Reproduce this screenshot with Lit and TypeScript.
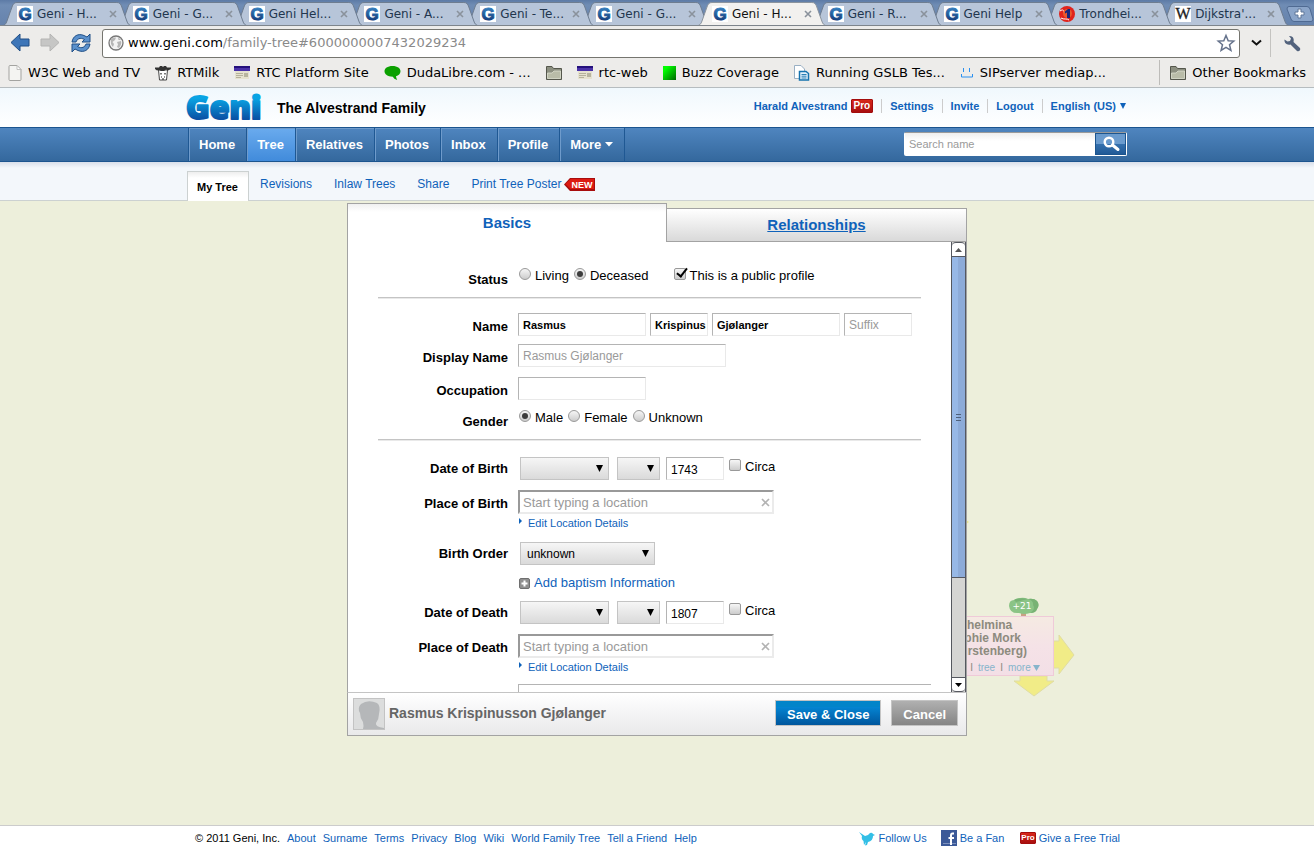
import { LitElement, html, css, nothing, TemplateResult } from "lit";
import { customElement, property } from "lit/decorators.js";
import { classMap } from "lit/directives/class-map.js";
import { styleMap } from "lit/directives/style-map.js";

const reset = css`
  *, *::before, *::after { box-sizing: border-box; }
  button, input, select { font: inherit; color: inherit; margin: 0; border-radius: 0; }
  button { background: none; border: 0; padding: 0; cursor: pointer; }
  a { text-decoration: none; color: #0f62ba; }
  svg { display: block; flex: none; overflow: visible; }
  input::placeholder { color: #9a9a9a; opacity: 1; }
`;

/* ---------- browser chrome ---------- */

const geniFavicon = html`<svg width="16" height="16" viewBox="0 0 16 16">
  <defs><linearGradient id="gf" x1="0" y1="0" x2="0" y2="1"><stop offset="0" stop-color="#3d8ccb"></stop><stop offset="1" stop-color="#0b2c6b"></stop></linearGradient></defs>
  <rect width="16" height="16" fill="#fff"></rect>
  <text x="8" y="14" text-anchor="middle" font-family="Liberation Sans, sans-serif" font-weight="700" font-size="17" fill="url(#gf)" stroke="url(#gf)" stroke-width="1">G</text>
</svg>`;

const redFavicon = html`<svg width="16" height="16" viewBox="0 0 16 16">
  <circle cx="8" cy="8" r="8" fill="#e0231c"></circle>
  <path d="M1 5 C4 3 5 4 5 7 M2 12 C5 14 8 12 10 14" stroke="#fff" stroke-width="1" fill="none"></path>
  <circle cx="8.500" cy="7.500" r="4.500" fill="#e9572c"></circle>
  <path d="M6 5.500 L9 3 H11 V12 H8 V6.500 L6 7.500 Z" fill="#14267c"></path>
</svg>`;

const wikiFavicon = html`<svg width="16" height="16" viewBox="0 0 16 16">
  <rect width="16" height="16" fill="#fff"></rect>
  <text x="8" y="13" text-anchor="middle" font-family="Liberation Serif, serif" font-size="16" fill="#222" stroke="#222" stroke-width="0.300">W</text>
</svg>`;

const folderIcon = html`<svg width="16" height="16" viewBox="0 0 16 16">
  <path d="M.5 14.500 V1.500 H6 L7.500 3.500 H15.500 V14.500 Z" fill="#8c8f80" stroke="#55574c"></path>
  <path d="M1.500 13.500 V8 H6 L8 6 H14.500 V13.500 Z" fill="#b9bca8" stroke="#dcdecf" stroke-width="0.800"></path>
</svg>`;

const pageIcon = html`<svg width="14" height="16" viewBox="0 0 14 16">
  <path d="M1 1.500 Q1 .5 2 .5 H9 L13 4.500 V14.500 Q13 15.500 12 15.500 H2 Q1 15.500 1 14.500 Z" fill="#f4f4f2" stroke="#a3a3a0"></path>
  <path d="M9 .5 V4.500 H13 Z" fill="#fff" stroke="#b5b5b2" stroke-width="0.800"></path>
</svg>`;

const cowIcon = html`<svg width="16" height="16" viewBox="0 0 16 16">
  <path d="M3.500 5 H12.500 L11.500 15 H4.500 Z" fill="#fff" stroke="#333" stroke-width="0.900"></path>
  <path d="M0 2.500 H4 L5 1 H7 L8 2 L9 1 H11 L12 2.500 H16 V4 L13 5.500 L11 4.500 L9 6 H6 L4 5 L2 5.500 L0 4 Z" fill="#333"></path>
  <path d="M6 8 V9.500 M10 8 V9.500 M6 12 H7 M9 12 H10 M7 14 H9" stroke="#222" stroke-width="1.200"></path>
</svg>`;

const newsIcon = html`<svg width="16" height="14" viewBox="0 0 16 14">
  <rect width="16" height="5" fill="#4a32a8"></rect><rect width="16" height="2" fill="#24107c"></rect>
  <rect x="1" y="5" width="14" height="8" fill="#e6e2cf"></rect>
  <path d="M2 7.500 H9 M2 9.500 H9 M2 11.500 H7" stroke="#b5b19c"></path>
  <rect x="10" y="7" width="4" height="4" fill="#b8b49f"></rect>
</svg>`;

const bubbleIcon = html`<svg width="17" height="14" viewBox="0 0 17 14">
  <path d="M8.500 0 C13.500 0 16.500 2.300 16.500 5.300 C16.500 7.800 14.500 9.600 12 10.300 Q12.200 12.500 13.200 14 Q9.800 13 8.800 10.700 C3.500 10.700 .5 8.300 .5 5.300 C.5 2.300 3.500 0 8.500 0 Z" fill="#0ba000"></path>
</svg>`;

const greenIcon = html`<svg width="13" height="14" viewBox="0 0 13 14">
  <defs><linearGradient id="gr" x1="0" y1="0" x2="1" y2="1"><stop offset="0.200" stop-color="#0f0"></stop><stop offset="1" stop-color="#060"></stop></linearGradient></defs>
  <rect width="13" height="14" fill="url(#gr)"></rect>
</svg>`;

const docsIcon = html`<svg width="16" height="16" viewBox="0 0 16 16">
  <path d="M.5 .5 H7 L10.500 4 V13.500 H.5 Z" fill="#fff" stroke="#9ab0c4"></path>
  <path d="M5.500 6.500 H12 L14.500 8.500 V15 H5.500 Z" fill="#e4f2fb" stroke="#1573ae" stroke-width="1.500"></path>
  <path d="M7.500 9.500 H12.500 M7.500 11.200 H12.500 M7.500 13 H12.500" stroke="#1573ae" stroke-width="0.900"></path>
</svg>`;

const smileIcon = html`<svg width="14" height="14" viewBox="0 0 14 14">
  <path d="M3.500 2 V6 M9.500 2 V6 M1.500 8 V11 H12.500 V8" stroke="#2a90f0" fill="none"></path>
</svg>`;

const tabs = [
  ["Geni - H...", geniFavicon], ["Geni - G...", geniFavicon], ["Geni Hel...", geniFavicon],
  ["Geni - A...", geniFavicon], ["Geni - Te...", geniFavicon], ["Geni - G...", geniFavicon],
  ["Geni - H...", geniFavicon], ["Geni - R...", geniFavicon], ["Geni Help", geniFavicon],
  ["Trondhei...", redFavicon], ["Dijkstra'...", wikiFavicon],
] as [string, TemplateResult][];
const activeTab = 6;

const bookmarks = [
  ["W3C Web and TV", pageIcon], ["RTMilk", cowIcon], ["RTC Platform Site", newsIcon],
  ["DudaLibre.com - ...", bubbleIcon], ["", folderIcon], ["rtc-web", newsIcon],
  ["Buzz Coverage", greenIcon], ["Running GSLB Tes...", docsIcon], ["SIPserver mediap...", smileIcon],
] as [string, TemplateResult][];

@customElement("browser-chrome")
class BrowserChrome extends LitElement {
  static styles = [reset, css`
    :host { display: block; font: 13px/18px "DejaVu Sans", sans-serif; color: #000; background: #edecea; border-bottom: 1px solid #b6bcbf; }
    .strip { display: flex; height: 26px; padding-left: 5px; background: linear-gradient(#5d7ba6, #6f8cb4 5px, #6683ad); border-bottom: 1px solid #7e858c; overflow: hidden; }
    .tabs { flex: 1; min-width: 0; display: flex; }
    .tab { flex: 1 1 0; min-width: 0; position: relative; display: flex; align-items: center; padding: 3px 2px 0 12px; }
    .shape { position: absolute; left: -3px; top: 2px; width: calc(100% + 14px); height: 24px; }
    .pick { position: relative; flex: 1; min-width: 0; display: flex; align-items: center; gap: 4px; font-size: 12px; color: #22364e; text-align: left; white-space: nowrap; }
    .on .pick { color: #111; }
    .close { position: relative; width: 10px; height: 10px; margin-right: 1px; }
    .new { width: 29px; height: 16px; margin: 6px 0 0 6px; }
    .bar { display: flex; align-items: center; height: 33px; padding: 1px 13px 0 10px; }
    .nav { display: flex; align-items: center; gap: 10px; margin-right: 10px; }
    .address { flex: 1; min-width: 0; display: flex; align-items: center; height: 29px; border: 1px solid #75756f; border-radius: 3px; background: #fff; padding: 0 4px 0 5px; }
    .globe { margin-right: 4px; }
    .address input { flex: 1; min-width: 0; border: 0; outline: 0; padding: 0; background: none; color: #8a8a8a; }
    .drop { margin: 0 8px 0 11px; }
    .wrench { padding-left: 13px; border-left: 1px solid #c4c3c0; height: 28px; display: flex; align-items: center; }
    .marks { display: flex; align-items: center; height: 28px; padding: 0 8px 1px; gap: 15px; }
    .mark { display: flex; align-items: center; gap: 6px; color: #000; white-space: nowrap; height: 25px; }
    .other { margin-left: auto; padding-left: 10px; border-left: 1px solid #bdbcb9; }
  `];

  render() {
    return html`
      <div class="strip">
        <div class="tabs">
          ${tabs.map(([title, icon], i) => {
            const on = i === activeTab;
            return html`<div class=${classMap({ tab: true, on })} style=${styleMap({ zIndex: String(on ? 20 : tabs.length - i) })}>
              <svg class="shape" viewBox="0 0 130 24" preserveAspectRatio="none">
                <path d="M0 24 C3 23 4 22 5 19 L10 5 C11 2 12 .5 15 .5 H115 C118 .5 119 2 120 5 L125 19 C126 22 127 23 130 24"
                  fill=${on ? "#f2f1ef" : "#b7c5d9"} stroke=${on ? "#8b949e" : "#6d7c90"}></path>
              </svg>
              <button class="pick">${icon}<span>${title}</span></button>
              <button class="close" aria-label="Close tab"><svg width="10" height="10" viewBox="0 0 10 10"><path d="M2 2 L8 8 M8 2 L2 8" stroke="#8a929c" stroke-width="1.600"></path></svg></button>
            </div>`;
          })}
        </div>
        <button class="new" aria-label="New tab"><svg width="29" height="16" viewBox="0 0 29 16">
          <path d="M4 .5 H22 Q24 .5 25 3 L28 13 Q28 15.500 26 15.500 H9 Q7 15.500 6 13 L2 3 Q2 .5 4 .5 Z" fill="#8ba5c9" stroke="#4f6a92"></path>
          <path d="M13 3 H16 V6 H19 V9 H16 V12 H13 V9 H10 V6 H13 Z" fill="#fff" stroke="#5f7799"></path>
        </svg></button>
      </div>
      <div class="bar">
        <div class="nav">
          <button aria-label="Back"><svg width="20" height="20" viewBox="0 0 20 20"><path d="M1 9.500 L10 1 V6 H19 V13 H10 V18 Z" fill="#3e76b8" stroke="#204f86"></path></svg></button>
          <button aria-label="Forward"><svg width="20" height="20" viewBox="0 0 20 20"><path d="M19 9.500 L10 1 V6 H1 V13 H10 V18 Z" fill="#c6c6c5" stroke="#b4b4b3"></path></svg></button>
          <button aria-label="Reload"><svg width="22" height="20" viewBox="0 0 22 20">
            <path d="M2 9 C3 3 8 0 14 2.500 L17 4 L20 1 V9 H12 L14.500 6.500 C10 4 7 6 6 9 Z" fill="#5a90cc" stroke="#204f86"></path>
            <path d="M20 11 C19 17 14 20 8 17.500 L5 16 L2 19 V11 H10 L7.500 13.500 C12 16 15 14 16 11 Z" fill="#5a90cc" stroke="#204f86"></path></svg></button>
        </div>
        <div class="address">
          <svg class="globe" width="16" height="16" viewBox="0 0 16 16"><circle cx="8" cy="8" r="7" fill="#f2f2f2" stroke="#777" stroke-width="1.300"></circle>
            <path d="M3 4 Q5 2 8 2.500 L7 5 L4.500 7 L6 9 L5 12 Q2 9 3 4 Z M9 7 L13 6 Q14 9 11 13 L9 12 L10 9.500 Z M10 2 L13 5 L10.500 5 Z" fill="#b5b5b5"></path></svg>
          <label for="url">www.geni.com</label><input id="url" .value=${"/family-tree#6000000007432029234"}>
          <button aria-label="Bookmark this page"><svg width="18" height="18" viewBox="0 0 18 18"><path d="M9 1.500 L11.200 6.700 L16.800 7.100 L12.500 10.800 L13.900 16.300 L9 13.300 L4.100 16.300 L5.500 10.800 L1.200 7.100 L6.800 6.700 Z" fill="#fff" stroke="#66738c" stroke-width="1.500"></path></svg></button>
        </div>
        <button class="drop" aria-label="More"><svg width="11" height="8" viewBox="0 0 11 8"><path d="M1 1.500 L5.500 5.500 L10 1.500" fill="none" stroke="#111" stroke-width="2"></path></svg></button>
        <button class="wrench" aria-label="Tools"><svg width="17" height="17" viewBox="0 0 17 17"><path d="M5 1 L7 3.500 L6 6 L3.500 6.500 L.5 4.500 C0 8 3 10.500 6.500 9.500 L13 16 C15 17 17 15 16 13 L9.500 7 C10.500 3.500 8.500 .5 5 1 Z" fill="#52627c"></path></svg></button>
      </div>
      <nav class="marks">
        ${bookmarks.map(([title, icon]) => html`<a class="mark" href="#" aria-label=${title || "Folder"}>${icon}${title ? html`<span>${title}</span>` : nothing}</a>`)}
        <a class="mark other" href="#">${folderIcon}<span>Other Bookmarks</span></a>
      </nav>`;
  }
}

/* ---------- site header ---------- */

@customElement("site-header")
class SiteHeader extends LitElement {
  static styles = [reset, css`
    :host { display: block; font: bold 11px/14px "Liberation Sans", Arial, sans-serif; }
    .wrap { width: 100%; max-width: 940px; margin: 0 auto; display: flex; }
    .top { background: linear-gradient(#f0f8fd, #fff); }
    .top .wrap { height: 39px; align-items: center; }
    .title { margin: 0 auto 0 14px; font-size: 14px; line-height: 18px; color: #000; }
    .account { display: flex; align-items: center; margin: 0 0 4px; padding: 0; list-style: none; }
    .account li { padding: 0 8px; border-left: 1px solid #ccc; }
    .account li:first-child { border: 0; }
    .account li:last-child { padding-right: 0; }
    .user { display: flex; align-items: center; gap: 3px; }
    .main { background: linear-gradient(#4f85bf, #34689d); border-top: 1px solid #1c558f; border-bottom: 1px solid #1c558f; }
    .main .wrap { height: 33px; align-items: stretch; font-size: 13px; }
    .menu { display: flex; border-left: 1px solid #1f5893; margin-left: 1px; }
    .item { display: flex; align-items: center; gap: 4px; padding: 0 11px 0 10px; color: #fff; border-right: 1px solid #1f5893; box-shadow: inset 1px 1px 0 #6f9bcb; }
    .item.on { background: linear-gradient(#6aabee, #418bdb); }
    .search { display: flex; align-items: stretch; margin: 4px 0 5px auto; width: 223px; border: 1px solid #fff; border-top-color: #9a9a9a; border-radius: 2px; font-weight: 400; }
    .search input { flex: 1; min-width: 0; border: 0; padding: 0 4px; font-size: 11px; background: linear-gradient(#eee, #fff 8px); outline: 0; }
    .go { width: 31px; display: flex; align-items: center; justify-content: center; background: linear-gradient(#6a9bce 50%, #3470ae 50%, #215a97); border: 1px solid #1c558f; }
    .sub { background: linear-gradient(#d8dfea, #f3f7fb 6px); border-bottom: 1px solid #ccd1d1; padding-top: 9px; font-weight: 400; }
    .sub .wrap { align-items: stretch; height: 29px; gap: 22px; }
    .mine { display: flex; align-items: center; padding: 0 10px 0 9px; margin-right: -11px; margin-bottom: -1px; font-weight: 700; color: #000; background: linear-gradient(#eee, #fff 6px); border: 1px solid #ccd1d1; border-bottom: 0; }
    .link { display: flex; align-items: center; gap: 3px; padding-bottom: 3px; font-size: 12px; }
  `];

  render() {
    return html`
      <header class="top"><div class="wrap">
        <svg width="76" height="38" viewBox="0 0 76 38" role="img" aria-label="Geni">
          <defs><linearGradient id="lg" gradientUnits="userSpaceOnUse" x1="0" y1="7" x2="0" y2="31"><stop offset="0.100" stop-color="#09a4e4"></stop><stop offset="0.950" stop-color="#0a52a5"></stop></linearGradient></defs>
          <text x="-1" y="30" font-family="Open Sans, Lato, sans-serif" font-weight="800" font-size="32" fill="url(#lg)" stroke="url(#lg)" stroke-width="2" stroke-linejoin="round">Geni</text>
        </svg>
        <h1 class="title">The Alvestrand Family</h1>
        <ul class="account">
          <li class="user"><a href="#">Harald Alvestrand</a><pro-badge></pro-badge></li>
          <li><a href="#">Settings</a></li><li><a href="#">Invite</a></li><li><a href="#">Logout</a></li>
          <li class="user"><a href="#">English (US)</a><svg width="8" height="7" viewBox="0 0 8 7"><path d="M1 1 H7 L4 7 Z" fill="#0f62ba"></path></svg></li>
        </ul>
      </div></header>
      <div class="main"><div class="wrap">
        <nav class="menu">
          ${["Home", "Tree", "Relatives", "Photos", "Inbox", "Profile"].map((t) => html`<a href="#" class=${classMap({ item: true, on: t === "Tree" })}>${t}</a>`)}
          <a href="#" class="item">More <svg width="8" height="5" viewBox="0 0 8 5"><path d="M0 0 H8 L4 4.500 Z" fill="#fff"></path></svg></a>
        </nav>
        <form class="search">
          <input type="text" placeholder="Search name" aria-label="Search name">
          <button class="go" type="button" aria-label="Search"><svg width="18" height="16" viewBox="0 0 18 16"><circle cx="7" cy="6" r="4.300" fill="none" stroke="#fff" stroke-width="2.400"></circle><path d="M10.500 9 L16 13.500" stroke="#fff" stroke-width="3" stroke-linecap="round"></path></svg></button>
        </form>
      </div></div>
      <div class="sub"><nav class="wrap">
        <a href="#" class="mine">My Tree</a>
        <a href="#" class="link">Revisions</a><a href="#" class="link">Inlaw Trees</a><a href="#" class="link">Share</a>
        <a href="#" class="link">Print Tree Poster
          <svg width="31" height="13" viewBox="0 0 31 13"><path d="M0 6.500 L6 0 H31 V13 H6 Z" fill="#a80d0d"></path><path d="M1.500 6 L6.500 1 H30 V11 H6.500 Z" fill="#dc1a12"></path><text x="18" y="9.500" text-anchor="middle" font-family="Liberation Sans, sans-serif" font-size="9" font-weight="700" fill="#fff">NEW</text></svg></a>
      </nav></div>`;
  }
}

@customElement("pro-badge")
class ProBadge extends LitElement {
  @property({ type: Boolean, reflect: true }) small = false;
  static styles = css`
    :host { display: inline-block; padding: 0 2px; background: linear-gradient(#d8261a, #a80f0f); border: 1px solid #a30d0d; border-radius: 1px; color: #fff; font: bold 10px/12px "Liberation Sans", sans-serif; }
    :host([small]) { font-size: 8px; line-height: 10px; padding: 0; }
  `;
  render() { return html`Pro`; }
}

/* ---------- tree behind the dialog ---------- */

@customElement("tree-node")
class TreeNode extends LitElement {
  static styles = [reset, css`
    :host { display: block; width: 135px; font: bold 12px/13px "Liberation Sans", Arial, sans-serif; }
    .badge { position: absolute; left: 68px; top: -19px; }
    .arrow { position: absolute; }
    .side { left: 113px; top: 18px; }
    .down { left: 73px; top: 60px; }
    .card { position: relative; width: 114px; padding: 2px 8px; border: 1px solid #efcad8; background: linear-gradient(#f5eae2, #f5e2e7 30px, #f3dfe6); color: #8d8b7e; }
    .name { margin: 0; font-size: inherit; }
    .acts { display: flex; align-items: center; gap: 5px; padding-top: 4px; margin: 0; font: 10px/11px "Liberation Sans", Arial, sans-serif; white-space: nowrap; }
    .acts a { color: #86b4cb; display: flex; align-items: center; gap: 2px; }
  `];
  render() {
    return html`
      <svg class="badge" width="32" height="20" viewBox="0 0 32 20"><rect x="13" y="15" width="5" height="5" fill="#c9a184"></rect>
        <path d="M1 9 Q1 3 6 3 Q8 1 12 1 Q16 0 20 2 Q26 1 29 4 Q32 8 29 12 Q28 16 22 16 Q16 18 11 16 Q2 17 1 9 Z" fill="#8bc486"></path>
        <path d="M20 2 Q26 1 29 4 Q32 8 29 12 Q28 16 22 16 Q28 12 25 8 Q26 4 20 2 Z M6 3 Q12 0 20 2 L8 5 Z" fill="#78b274"></path>
        <text x="14" y="12" text-anchor="middle" font-family="DejaVu Sans, sans-serif" font-size="9" font-weight="400" fill="#fff">+21</text></svg>
      <svg class="arrow side" width="22" height="42" viewBox="0 0 22 42"><path d="M0 7 H6 V1 L21 21 L6 40 V34 H0 Z" fill="#f1ec87" stroke="#dfdca5"></path></svg>
      <svg class="arrow down" width="42" height="21" viewBox="0 0 42 21"><path d="M7 0 V5 H1 L21 20 L41 5 H34 V0 Z" fill="#f1ec87" stroke="#dfdca5"></path></svg>
      <div class="card">
        <h3 class="name">Wilhelmina<br>Sophie Mork<br>(Fürstenberg)</h3>
        <p class="acts"><a href="#">edit</a>I<a href="#">tree</a>I<a href="#">more <svg width="7" height="6" viewBox="0 0 7 6"><path d="M0 0 H7 L3.500 6 Z" fill="#86b4cb"></path></svg></a></p>
      </div>`;
  }
}

/* ---------- profile dialog ---------- */

@customElement("profile-dialog")
class ProfileDialog extends LitElement {
  static styles = [reset, css`
    :host { display: block; width: 100%; max-width: 620px; font: 13px/16px "Liberation Sans", Arial, sans-serif; color: #000; }
    .tabs { display: grid; grid-template-columns: 320fr 300fr; align-items: end; }
    .tab { display: flex; align-items: center; justify-content: center; font-size: 15px; font-weight: 700; color: #0f62ba; }
    .first { height: 39px; background: linear-gradient(#f0f0f0, #fff 8px); border: 1px solid #a3a3a3; border-bottom: 0; }
    .second { height: 34px; background: linear-gradient(#fff, #d9d9d9); border: 1px solid #a3a3a3; border-left: 0; text-decoration: underline; }
    .body { display: flex; height: 450px; background: #fff; border: 1px solid #a3a3a3; border-width: 0 1px; overflow: hidden; }
    .form { flex: 1; min-width: 0; padding-top: 26px; overflow: hidden; }
    .row { display: grid; grid-template-columns: 160px 1fr; column-gap: 10px; align-items: start; margin-bottom: 10px; }
    .tight { margin-bottom: 8px; }
    .choice { margin-bottom: 9px; }
    .label { font-weight: 700; text-align: right; padding-top: 6px; }
    .choice .label { padding-top: 4px; }
    .fields { display: flex; gap: 4px; }
    .choices { display: flex; padding-left: 1px; gap: 5px; }
    .rule { height: 2px; border: 0; border-top: 1px solid #c4c4c4; border-bottom: 1px solid #e9e9e9; margin: 0 30px 14px 30px; }
    .opt { display: flex; align-items: center; gap: 4px; }
    .opt input { appearance: none; width: 12px; height: 12px; margin-bottom: 4px; border: 1px solid #999; background: linear-gradient(#f6f6f6, #ccc); display: grid; place-items: center; }
    .opt input[type="radio"] { border-radius: 50%; }
    .opt input[type="checkbox"] { border-radius: 2px; }
    .opt input[type="radio"]:checked::after { content: ""; width: 6px; height: 6px; border-radius: 50%; background: #3c3c3c; }
    .opt input[type="checkbox"]:checked::after { content: ""; width: 6px; height: 11px; margin: -5px 0 0 4px; border: solid #000; border-width: 0 2px 2px 0; transform: rotate(38deg); }
    .public { margin-left: 20px; }
    .text { height: 23px; border: 1px solid #b4b4b4; border-right-color: #e9e9e9; border-bottom-color: #e9e9e9; background: #fff; padding: 0 1px 0 4px; font-size: 12px; outline: 0; }
    .bold { font-weight: 700; font-size: 11px; }
    .w128 { width: 128px; } .w58 { width: 58px; } .w68 { width: 68px; } .w208 { width: 208px; }
    .date { display: flex; padding: 2px 0 0 2px; gap: 8px; }
    .pick { display: grid; }
    .pick select, .pick svg { grid-area: 1 / 1; }
    .pick svg { justify-self: end; align-self: center; margin: 0 6px 0 0; pointer-events: none; }
    .pick select { appearance: none; width: 100%; height: 23px; padding: 0 6px; font-size: 12px; background: linear-gradient(#f6f6f6, #dadada); border: 1px solid #c4c4c4; outline: 0; }
    .month { width: 89px; } .day { width: 43px; } .order { width: 135px; }
    .year { width: 58px; margin-left: -2px; padding-top: 2px; }
    .date .opt { margin-left: -3px; height: 19px; }
    .place { display: flex; align-items: center; width: 256px; height: 24px; border: 2px solid #999; border-right-color: #ebebeb; border-bottom-color: #ebebeb; padding: 0 2px 0 3px; }
    .place input { flex: 1; min-width: 0; border: 0; padding: 2px 0 0; outline: 0; background: none; }
    .edit { display: flex; align-items: flex-start; gap: 6px; font-size: 11px; line-height: 14px; margin-top: 2px; width: max-content; }
    .edit svg { margin-top: 2px; }
    .add { grid-column: 2; display: flex; align-items: center; gap: 4px; padding-left: 1px; color: #0f62ba; width: max-content; }
    .more { height: 40px; margin: 0 20px 0 170px; border: 1px solid #b4b4b4; border-right: 0; }
    .scroll { width: 15px; display: flex; flex-direction: column; border: 1px solid #55585f; border-width: 0 1px; background: #d5d5d3; }
    .end { height: 15px; flex: none; display: grid; place-items: center; background: #fff; border: 1px solid #55585f; border-width: 1px 0; }
    .scroll .end:first-child { border-radius: 4px 4px 0 0; } .scroll .end:last-child { border-radius: 0 0 4px 4px; }
    .thumb { flex: 320 1 0; display: grid; place-items: center; background: linear-gradient(90deg, #97b8e6 50%, #8dabd8 50%); border-bottom: 1px solid #55585f; }
    .track { flex: 99 1 0; }
    .foot { display: flex; align-items: center; height: 44px; padding: 0 8px 0 5px; background: linear-gradient(#fff, #e9e9ea); border: 1px solid #a3a3a3; border-top-color: #c4c4c4; }
    .who { margin: 0 auto 2px 4px; font-size: 14px; line-height: 18px; color: #666; }
    .btn { height: 26px; margin-bottom: 2px; padding: 3px 11px 0; border: 1px solid #c4c4c4; color: #fff; font-weight: 700; }
    .save { margin-right: 10px; background: linear-gradient(#0284c9 25%, #0484d2 25%, #00569d); }
    .cancel { background: linear-gradient(#b0b0b0, #858585); }
  `];

  private opt(type: string, name: string, text: string, checked = false, cls = "") {
    return html`<label class="opt ${cls}"><input type=${type} name=${name} ?checked=${checked}>${text}</label>`;
  }
  private pick(cls: string, label: string, id = "", text = "") {
    return html`<span class="pick ${cls}"><select id=${id || nothing} aria-label=${label}><option>${text}</option></select>
      <svg width="7" height="7" viewBox="0 0 7 7"><path d="M0 0 H7 L3.500 7 Z" fill="#000"></path></svg></span>`;
  }
  private date(id: string, label: string, year: string) {
    return html`<div class="row">
      <label class="label" for=${id}>${label}</label>
      <div class="date">${this.pick("month", "Month")}${this.pick("day", "Day")}
        <input class="text year" id=${id} .value=${year}>${this.opt("checkbox", id + "c", "Circa")}</div>
    </div>`;
  }
  private place(id: string, label: string) {
    return html`<div class="row">
      <label class="label" for=${id}>${label}</label>
      <div>
        <div class="place"><input id=${id} placeholder="Start typing a location"><button type="button" aria-label="Clear"><svg width="9" height="9" viewBox="0 0 9 9"><path d="M1 1 L8 8 M8 1 L1 8" stroke="#b3b3b3" stroke-width="1.700"></path></svg></button></div>
        <a href="#" class="edit"><svg width="4" height="6" viewBox="0 0 4 6"><path d="M1 0 L4 3 L1 6 Z" fill="#0f62ba"></path></svg>Edit Location Details</a>
      </div>
    </div>`;
  }

  render() {
    return html`
      <div class="tabs"><a href="#" class="tab first">Basics</a><a href="#" class="tab second">Relationships</a></div>
      <div class="body">
        <form class="form">
          <div class="row choice"><span class="label">Status</span><div class="choices">
            ${this.opt("radio", "status", "Living")}${this.opt("radio", "status", "Deceased", true)}${this.opt("checkbox", "public", "This is a public profile", true, "public")}</div></div>
          <hr class="rule">
          <div class="row tight"><label class="label" for="first">Name</label><div class="fields">
            <input class="text bold w128" id="first" .value=${"Rasmus"}><input class="text bold w58" aria-label="Middle name" .value=${"Krispinusson"}>
            <input class="text bold w128" aria-label="Last name" .value=${"Gjølanger"}><input class="text w68" aria-label="Suffix" placeholder="Suffix"></div></div>
          <div class="row"><label class="label" for="display">Display Name</label><div class="fields"><input class="text w208" id="display" placeholder="Rasmus Gjølanger"></div></div>
          <div class="row"><label class="label" for="job">Occupation</label><div class="fields"><input class="text w128" id="job"></div></div>
          <div class="row choice"><span class="label">Gender</span><div class="choices">
            ${this.opt("radio", "gender", "Male", true)}${this.opt("radio", "gender", "Female")}${this.opt("radio", "gender", "Unknown")}</div></div>
          <hr class="rule">
          ${this.date("birth", "Date of Birth", "1743")}
          ${this.place("bplace", "Place of Birth")}
          <div class="row"><label class="label" for="order">Birth Order</label><div class="date">${this.pick("order", "Birth Order", "order", "unknown")}</div></div>
          <div class="row tight"><button type="button" class="add"><svg width="11" height="11" viewBox="0 0 11 11"><rect x=".5" y=".5" width="10" height="10" rx="1.500" fill="#909090" stroke="#6f6f6f"></rect><path d="M5.500 2.500 V8.500 M2.500 5.500 H8.500" stroke="#fff" stroke-width="2"></path></svg>Add baptism Information</button></div>
          ${this.date("death", "Date of Death", "1807")}
          ${this.place("dplace", "Place of Death")}
          <div class="more"></div>
        </form>
        <div class="scroll">
          <button class="end" aria-label="Scroll up"><svg width="7" height="4" viewBox="0 0 7 4"><path d="M0 4 L3.500 0 L7 4 Z" fill="#555"></path></svg></button>
          <div class="thumb"><svg width="5" height="7" viewBox="0 0 5 7"><path d="M0 .5 H5 M0 3.500 H5 M0 6.500 H5" stroke="#4f617c"></path></svg></div>
          <div class="track"></div>
          <button class="end" aria-label="Scroll down"><svg width="7" height="4" viewBox="0 0 7 4"><path d="M0 0 L3.500 4 L7 0 Z" fill="#000"></path></svg></button>
        </div>
      </div>
      <div class="foot">
        <svg width="32" height="32" viewBox="0 0 32 32"><rect x=".5" y=".5" width="31" height="31" fill="#dcdddd" stroke="#c3c3c3"></rect>
          <path d="M10 31 Q11 28 10 24 Q7 20 7 15 Q4 10 8 6 Q15 1 24 5 Q28 8 26 16 Q26 21 23 25 Q22 29 31 30 V31 Z" fill="#b5b7b9"></path></svg>
        <h2 class="who">Rasmus Krispinusson Gjølanger</h2>
        <button class="btn save">Save &amp; Close</button><button class="btn cancel">Cancel</button>
      </div>`;
  }
}

/* ---------- footer ---------- */

@customElement("site-footer")
class SiteFooter extends LitElement {
  static styles = [reset, css`
    :host { display: block; background: #fff; border-top: 1px solid #ccc; font: 11px/14px "Liberation Sans", Arial, sans-serif; }
    .wrap { width: 100%; max-width: 940px; height: 24px; margin: 0 auto; padding: 0 7px 0 8px; display: flex; align-items: center; gap: 7px; white-space: nowrap; }
    .social { display: flex; align-items: center; gap: 3px; }
    .first { margin-left: auto; }
    .gap { margin-left: 7px; }
    .wide { margin-left: 9px; }
  `];
  render() {
    return html`<footer class="wrap"><span>© 2011 Geni, Inc.</span>
      ${["About", "Surname", "Terms", "Privacy", "Blog", "Wiki", "World Family Tree", "Tell a Friend", "Help"].map((t) => html`<a href="#">${t}</a>`)}
      <a href="#" class="social first"><svg width="16" height="15" viewBox="0 0 16 15"><path d="M0 1 L6 5 Q9 5 11 2 Q13 1 14 3 L16 4 L14 5 Q14 10 9 11 L8 14 L6 14.500 L7 11 L5 14 L4.500 10 Q2 8 3 5 Z" fill="#33bfe6"></path></svg>Follow Us</a>
      <a href="#" class="social gap"><svg width="16" height="16" viewBox="0 0 16 16"><rect width="16" height="16" fill="#3b5998"></rect><path d="M2 13.500 H15" stroke="#7c90bd"></path><path d="M13 3.500 H11.500 Q10 3.500 10 5.500 V15 M7.500 8 H13" stroke="#fff" stroke-width="2" fill="none"></path></svg>Be a Fan</a>
      <a href="#" class="social wide"><pro-badge small></pro-badge>Give a Free Trial</a>
    </footer>`;
  }
}

@customElement("app-root")
class AppRoot extends LitElement {
  static styles = css`
    :host { display: flex; flex-direction: column; min-height: 100vh; background: #edefdb; }
    main { flex: 1; position: relative; display: flex; justify-content: center; align-items: flex-start; padding-top: 2px; overflow: hidden; }
    profile-dialog { position: relative; }
    tree-node { position: absolute; left: calc(50% + 283px); top: 415px; }
    .spark { position: absolute; left: calc(50% + 303px); top: 316px; }
  `;
  render() {
    return html`
      <browser-chrome></browser-chrome>
      <site-header></site-header>
      <main>
        <svg class="spark" width="10" height="10" viewBox="0 0 10 10"><path d="M3 1 L9 5 L3 9 Z" fill="#eae58c"></path></svg>
        <tree-node></tree-node>
        <profile-dialog></profile-dialog>
      </main>
      <site-footer></site-footer>`;
  }
}
